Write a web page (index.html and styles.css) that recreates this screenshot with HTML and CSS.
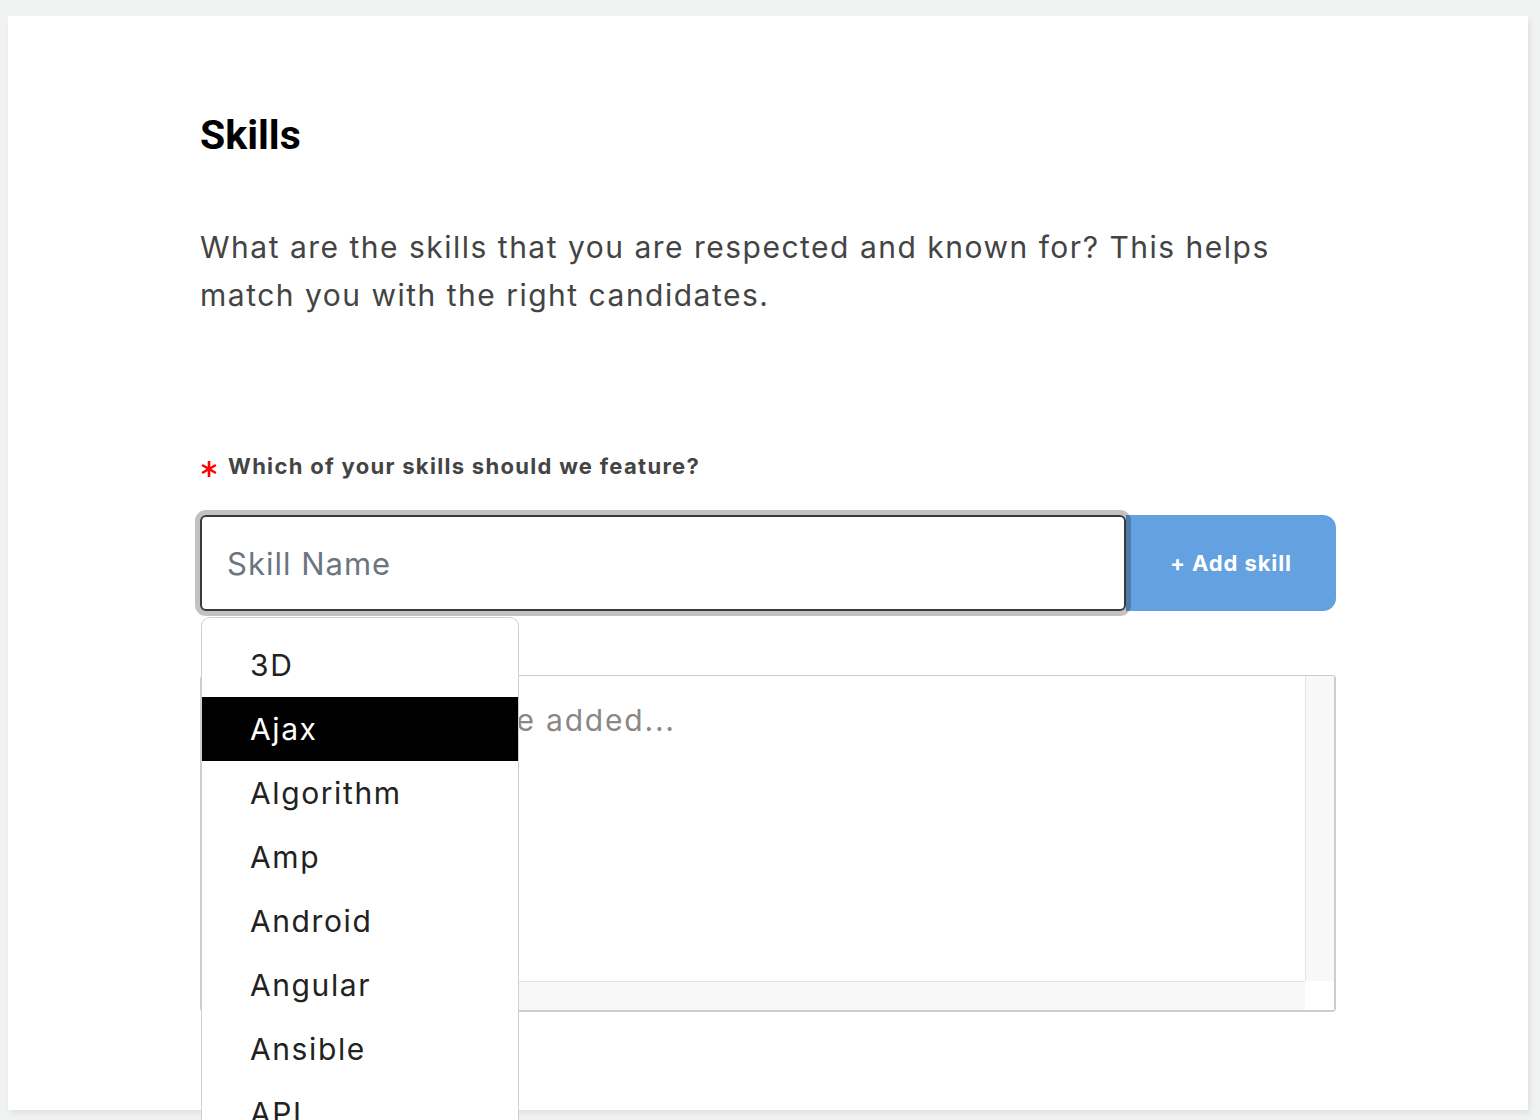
FILE: index.html
```html
<!DOCTYPE html>
<html lang="en">
<head>
<meta charset="utf-8">
<title>Skills</title>
<link rel="stylesheet" href="styles.css">
</head>
<body>
<main class="card">
  <h1 class="title">Skills</h1>
  <p class="intro">What are the skills that you are respected and known for? This helps match you with the right candidates.</p>
  <div class="field">
    <label class="label" for="skill"><svg class="req" viewBox="0 0 18 18" width="18" height="18" aria-hidden="true"><g stroke="#f00" stroke-width="2.6" stroke-linecap="butt"><line x1="9" y1="1" x2="9" y2="17"/><line x1="2.1" y1="5" x2="15.9" y2="13"/><line x1="2.1" y1="13" x2="15.9" y2="5"/></g></svg>Which of your skills should we feature?</label>
    <div class="row">
      <div class="input-wrap">
        <input id="skill" class="input" type="text" placeholder="Skill Name">
        <ul class="dropdown">
          <li class="opt">3D</li>
          <li class="opt active">Ajax</li>
          <li class="opt">Algorithm</li>
          <li class="opt">Amp</li>
          <li class="opt">Android</li>
          <li class="opt">Angular</li>
          <li class="opt">Ansible</li>
          <li class="opt">API</li>
        </ul>
      </div>
      <button class="add" type="button">+ Add skill</button>
    </div>
    <div class="list">
      <div class="list-body"><span class="placeholder">Skills that you have added...</span></div>
      <div class="vscroll"></div>
      <div class="hscroll"></div>
      <div class="corner"></div>
    </div>
  </div>
</main>
</body>
</html>
```
FILE: styles.css
```css
html, body {
  margin: 0;
  padding: 0;
  background: #f1f3f2;
  height: 1120px;
  overflow: hidden;
}
body {
  padding: 16px 12px 0 8px;
  font-family: "Inter", "Open Sans", sans-serif;
  color: #333;
}
.card {
  background: #fff;
  height: 1094px;
  box-shadow: 2px 3px 6px rgba(0,0,0,0.08);
  padding: 97px 192px 0 192px;
  box-sizing: border-box;
}
.title {
  margin: 0;
  font-family: "Roboto", sans-serif;
  font-weight: 700;
  font-size: 41px;
  line-height: 44px;
  color: #000;
}
.intro {
  margin: 66px 0 0 0;
  font-size: 30px;
  line-height: 48px;
  color: #444;
  font-weight: 400;
  letter-spacing: 1.5px;
  max-width: 1100px;
}
.field {
  margin-top: 132px;
}
.label {
  display: flex;
  align-items: center;
  font-size: 22px;
  font-weight: 700;
  color: #444;
  line-height: 30px;
  letter-spacing: 1.3px;
}
.req {
  display: block;
  flex: none;
  margin: 6px 10px 0 0;
}
.row {
  display: flex;
  margin-top: 34px;
  width: 1136px;
}
.input-wrap {
  position: relative;
  width: 926px;
  height: 96px;
}
.input {
  display: block;
  width: 926px;
  height: 96px;
  box-sizing: border-box;
  border: 2px solid #3a3a3a;
  border-radius: 6px;
  outline: 5px solid rgba(0,0,0,0.24);
  outline-offset: 0;
  padding: 0 25px;
  font-family: inherit;
  font-size: 31px;
  letter-spacing: 1px;
  color: #333;
  background: #fff;
  position: relative;
  z-index: 2;
}
.input::placeholder {
  color: #6b7580;
}
.add {
  flex: 1;
  height: 96px;
  border: none;
  border-radius: 0 13px 13px 0;
  background: #64a1e0;
  color: #fff;
  font-family: inherit;
  font-weight: 700;
  font-size: 22px;
  letter-spacing: 0.9px;
  padding: 0;
}
.dropdown {
  position: absolute;
  left: 1px;
  top: 102px;
  width: 318px;
  height: 560px;
  margin: 0;
  padding: 15px 0 0 0;
  list-style: none;
  background: #fff;
  border: 1px solid #cfcfcf;
  border-bottom: none;
  border-radius: 9px 9px 0 0;
  box-sizing: border-box;
  z-index: 5;
  overflow: hidden;
}
.opt {
  height: 64px;
  line-height: 64px;
  padding-left: 48px;
  font-size: 30px;
  letter-spacing: 1.6px;
  color: #222;
}
.opt.active {
  background: #000;
  color: #fff;
}
.list {
  position: relative;
  margin-top: 64px;
  width: 1136px;
  height: 337px;
  box-sizing: border-box;
  border: 1px solid #cdcdcd;
  border-right-width: 2px;
  border-bottom-width: 2px;
  border-radius: 4px;
  background: #fff;
  display: grid;
  grid-template-columns: 1fr 29px;
  grid-template-rows: 1fr 29px;
}
.list-body {
  padding: 24px 26px;
  font-size: 30px;
  line-height: 40px;
  letter-spacing: 1.8px;
  color: #888;
}
.vscroll {
  background: #f8f8f8;
  border-left: 1px solid #e4e4e4;
}
.hscroll {
  background: #f8f8f8;
  border-top: 1px solid #e4e4e4;
}
.corner {
  background: #fff;
}
```
